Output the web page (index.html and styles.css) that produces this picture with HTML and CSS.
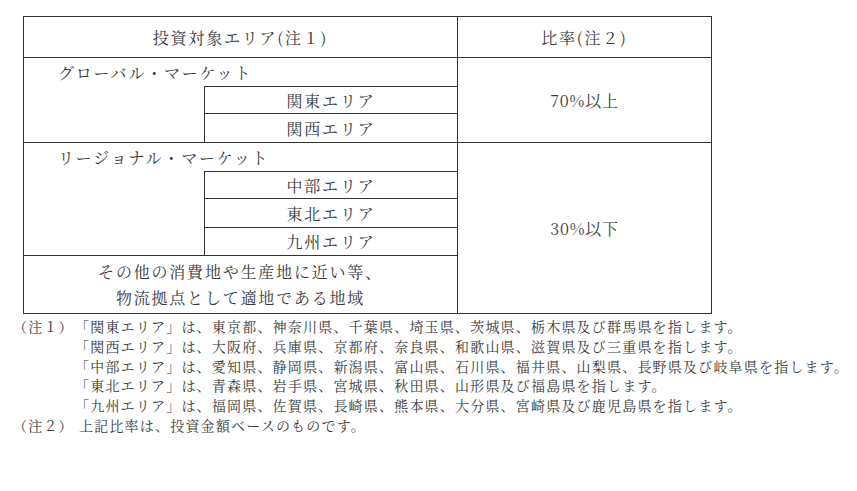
FILE: index.html
```html
<!DOCTYPE html>
<html lang="ja">
<head>
<meta charset="utf-8">
<title>投資対象エリア</title>
<link rel="stylesheet" href="styles.css">
</head>
<body>
<div class="page">
  <div class="tbl">
    <div class="cell head-left br bb">投資対象エリア(注１)</div>
    <div class="cell head-right bb">比率(注２)</div>

    <div class="cell group g1 br">グローバル・マーケット</div>
    <div class="cell blank b1 br bb"></div>
    <div class="cell sub r3 bt br bb">関東エリア</div>
    <div class="cell sub r4 br bb">関西エリア</div>
    <div class="cell ratio ratio1 bb">70%以上</div>

    <div class="cell group g2 br">リージョナル・マーケット</div>
    <div class="cell blank b2 br bb"></div>
    <div class="cell sub r6 bt br bb">中部エリア</div>
    <div class="cell sub r7 br bb">東北エリア</div>
    <div class="cell sub r8 br bb">九州エリア</div>
    <div class="cell other br">その他の消費地や生産地に近い等、<br>物流拠点として適地である地域</div>
    <div class="cell ratio ratio2">30%以下</div>
  </div>

  <div class="notes">
    <div class="note"><span class="label">（注１）</span><span class="text">「関東エリア」は、東京都、神奈川県、千葉県、埼玉県、茨城県、栃木県及び群馬県を指します。</span></div>
    <div class="note"><span class="label"></span><span class="text">「関西エリア」は、大阪府、兵庫県、京都府、奈良県、和歌山県、滋賀県及び三重県を指します。</span></div>
    <div class="note"><span class="label"></span><span class="text">「中部エリア」は、愛知県、静岡県、新潟県、富山県、石川県、福井県、山梨県、長野県及び岐阜県を指します。</span></div>
    <div class="note"><span class="label"></span><span class="text">「東北エリア」は、青森県、岩手県、宮城県、秋田県、山形県及び福島県を指します。</span></div>
    <div class="note"><span class="label"></span><span class="text">「九州エリア」は、福岡県、佐賀県、長崎県、熊本県、大分県、宮崎県及び鹿児島県を指します。</span></div>
    <div class="note"><span class="label">（注２）</span><span class="text t2">上記比率は、投資金額ベースのものです。</span></div>
  </div>
</div>
</body>
</html>
```

FILE: styles.css
```css
html, body {
  margin: 0;
  padding: 0;
  background: #ffffff;
}

body {
  font-family: "Noto Serif CJK JP", "Noto Serif JP", "IPAMincho", "Noto Sans CJK JP", "Liberation Serif", serif;
  color: #3a3a3a;
}

.page {
  padding: 16px 0 0 23px;
}

.tbl {
  display: grid;
  grid-template-columns: 181px 253px 253px;
  grid-template-rows: 41px 28px 28px 29px 28px 28px 29px 28px 57px;
  width: max-content;
  border: 1px solid #333;
  font-size: 16px;
  letter-spacing: 1.8px;
}

.cell {
  box-sizing: border-box;
  display: flex;
  align-items: center;
  white-space: nowrap;
}

.br { border-right: 1px solid #333; }
.bb { border-bottom: 1px solid #333; }
.bt { border-top: 1px solid #333; }

.head-left {
  grid-column: 1 / 3;
  grid-row: 1;
  justify-content: center;
}

.head-right {
  grid-column: 3;
  grid-row: 1;
  justify-content: center;
}

.group {
  grid-column: 1 / 3;
  padding-left: 34px;
}
.g1 { grid-row: 2; }
.g2 { grid-row: 5; }

.b1 { grid-column: 1; grid-row: 3 / 5; }
.b2 { grid-column: 1; grid-row: 6 / 9; }

.sub {
  grid-column: 2;
  justify-content: center;
}
.r3 { grid-row: 3; }
.r4 { grid-row: 4; }
.r6 { grid-row: 6; }
.r7 { grid-row: 7; }
.r8 { grid-row: 8; }

.other {
  grid-column: 1 / 3;
  grid-row: 9;
  justify-content: center;
  text-align: center;
  line-height: 26px;
}

.ratio {
  grid-column: 3;
  justify-content: center;
  letter-spacing: 0.8px;
}
.ratio1 { grid-row: 2 / 5; }
.ratio2 { grid-row: 5 / 10; }

.notes {
  margin: 3px 0 0 -10px;
  font-size: 14px;
  letter-spacing: 1.2px;
  line-height: 19.8px;
}

.note {
  display: flex;
  white-space: nowrap;
}

.label {
  width: 62px;
  flex: none;
}

.t2 {
  padding-left: 4px;
}
```
